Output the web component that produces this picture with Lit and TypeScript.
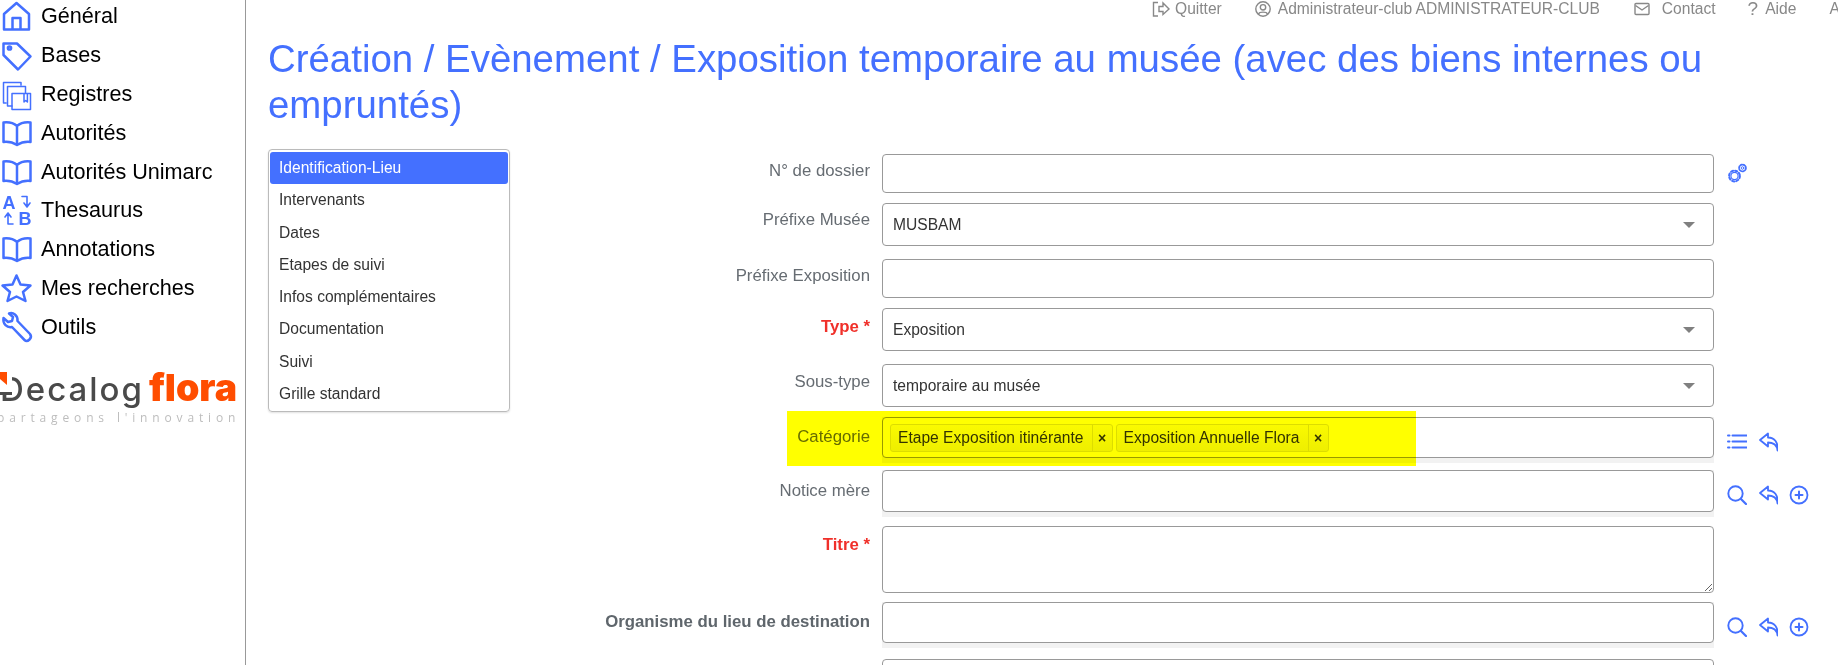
import { LitElement, html, css, svg } from "lit";
import { customElement } from "lit/decorators.js";

const book = svg`<path d="M17 14C13 10.5 8 10 3.5 10.5V30C8 29.5 13 30.5 17 33C21 30.5 26 29.5 30.5 30V10.5C26 10 21 10.5 17 14ZM17 14V33"/>`;
const menu = [
  { t: "Général", i: svg`<path d="M4 19L16.500 8L29 19V34.500H4ZM12.500 34.500V23H20.500V34.500"/>` },
  { t: "Bases", i: svg`<path d="M3.500 9.500H17L30.500 22.500L18 35.500L3.500 21Z"/><circle cx="9.500" cy="14" r="1.600"/>` },
  { t: "Registres", i: svg`<g stroke-width="1.500"><path d="M6 30H3.500V9.500H21V12M12 33H7.500V13.500H25.500V20"/><path d="M12 20.500H30.500V36.500H12ZM24 20.500V29L25.700 27.500L27.400 29V20.500"/></g>` },
  { t: "Autorités", i: book },
  { t: "Autorités Unimarc", i: book },
  { t: "Thesaurus", i: svg`<text x="2.500" y="19.500" class="gl">A</text><text x="18.500" y="35.500" class="gl">B</text><g stroke-width="1.600"><path d="M22 7.500H27V17M24 14L27 18L30 14M13 35H8V25M5 28L8 24L11 28"/></g>` },
  { t: "Annotations", i: book },
  { t: "Mes recherches", i: svg`<path d="M16.500 8.500L20.500 17.500L30.500 18.500L23 25L25.500 34L16.500 29.500L7.500 34L10 25L2.500 18.500L12.500 17.500Z"/>` },
  { t: "Outils", i: svg`<path d="M3.500 12L8 16L12 15L13 11L9 7.500C13 6 18 9 17.500 15L30 28C31.500 30 31 32 29.500 33.500C28 35 26 35.500 24.500 34L12 21C7 22 2.500 18 3.500 12Z"/>` },
];

const tabs = ["Identification-Lieu", "Intervenants", "Dates", "Etapes de suivi", "Infos complémentaires", "Documentation", "Suivi", "Grille standard"];

const gear = svg`<g fill="none" stroke="#4470ff"><circle cx="7.500" cy="13" r="3.600" stroke-width="1.200"/><circle cx="7.500" cy="13" r="5.400" stroke-width="2" stroke-dasharray="2.200 2.040"/><circle cx="15.500" cy="5" r="1.300" stroke-width="1"/><circle cx="15.500" cy="5" r="3.400" stroke-width="1.800" stroke-dasharray="1.500 1.170"/></g>`;
const listI = svg`<path d="M5.500 3.500H20M5.500 9.500H20M5.500 15.500H20" stroke-width="2"/><path d="M1 3.500H2.500M1 9.500H2.500M1 15.500H2.500" stroke-width="2"/>`;
const back = svg`<path d="M19.500 18.500C19 13 15.500 10.500 10 10.500V14.500L2 8L10 1.500V5.500C16.500 5.500 20.500 10.500 19.500 18.500Z" stroke-width="1.800" stroke-linejoin="round"/>`;
const search = svg`<circle cx="8.500" cy="8.500" r="7.200" stroke-width="1.900"/><path d="M14 14L19 19" stroke-width="2.200"/>`;
const plus = svg`<circle cx="10" cy="10" r="8.500" stroke-width="1.800"/><path d="M10 6.500V13.500M6.500 10H13.500" stroke-width="2"/>`;

interface Row {
  label: string; kind: string; mt: number; h: number; lt: number;
  value?: string; req?: boolean; bold?: boolean; strip?: boolean; icons?: unknown[]; iconTop?: number;
}
const rows: Row[] = [
  { label: "N° de dossier", kind: "input", mt: 0, h: 39, lt: 8, icons: [gear], iconTop: 9 },
  { label: "Préfixe Musée", kind: "select", mt: 10, h: 43, lt: 8, value: "MUSBAM" },
  { label: "Préfixe Exposition", kind: "input", mt: 13, h: 39, lt: 8 },
  { label: "Type", req: true, kind: "select", mt: 10, h: 43, lt: 10, value: "Exposition" },
  { label: "Sous-type", kind: "select", mt: 13, h: 43, lt: 9, value: "temporaire au musée" },
  { label: "Catégorie", kind: "tags", mt: 10, h: 41, lt: 11, strip: true, icons: [listI, back], iconTop: 15 },
  { label: "Notice mère", kind: "input", mt: 7, h: 42, lt: 12, strip: true, icons: [search, back, plus], iconTop: 15 },
  { label: "Titre", req: true, kind: "area", mt: 9, h: 67, lt: 10 },
  { label: "Organisme du lieu de destination", bold: true, kind: "input", mt: 9, h: 41, lt: 11, strip: true, icons: [search, back, plus], iconTop: 15 },
  { label: "", kind: "input", mt: 11, h: 41, lt: 11 },
];

@customElement("app-root")
export class AppRoot extends LitElement {
  static styles = css`
    :host { display: block; width: 1838px; height: 665px; overflow: hidden; background: #fff; font-family: "Liberation Sans", Arial, sans-serif; }
    .app { display: flex; height: 665px; }
    .side { width: 245px; flex: none; border-right: 1px solid #999; overflow: hidden; }
    .menu { margin-top: -5px; }
    .mi { display: flex; align-items: center; height: 38.9px; font-size: 21.600px; color: #000; gap: 7px; }
    .mi span { padding-top: 3px; white-space: nowrap; }
    .mi svg { width: 34px; height: 39px; flex: none; fill: none; stroke: #4470ff; stroke-width: 2.500; stroke-linejoin: round; stroke-linecap: round; }
    .gl { font: bold 18px "Liberation Sans", sans-serif; fill: #4470ff; stroke: none; }
    .logo { position: relative; margin-top: 20px; height: 70px; overflow: hidden; }
    .brand { display: flex; align-items: baseline; height: 38px; white-space: nowrap; }
    .dec { font: 500 33px Inter, sans-serif; color: #4a4a4a; letter-spacing: 2px; }
    .flora { font: 900 37.500px Inter, sans-serif; color: #ff4d00; margin-left: 5px; }
    .mark { position: absolute; left: 0; top: 6px; width: 12px; height: 26px; }
    .tag { font: 12px "Open Sans", sans-serif; color: #bdbdbd; letter-spacing: 4.850px; white-space: nowrap; margin-left: -3px; margin-top: 6px; }
    .main { flex: 1; min-width: 0; overflow: hidden; }
    .top { display: flex; align-items: center; height: 18px; padding-left: 906px; font-size: 15.600px; color: #888; white-space: nowrap; }
    .top svg { fill: none; stroke: #888; stroke-width: 1.400; flex: none; }
    .ti { display: flex; align-items: center; }
    .ml5 { margin-left: 5px; } .ml7 { margin-left: 7px; } .ml12 { margin-left: 12px; }
    .g33 { margin-left: 33px; } .g34 { margin-left: 34px; } .g32 { margin-left: 32px; }
    .q { font-size: 19px; margin-right: 7px; }
    h1 { margin: 18px 0 0 22px; font-size: 38.400px; line-height: 46px; font-weight: 400; color: #4470ff; width: 1480px; }
    .body { display: flex; margin: 21px 0 0 22px; align-items: flex-start; }
    .tabs { width: 238px; flex: none; border: 1px solid #bbb; border-radius: 4px; padding: 2px 1px 1px; box-shadow: 0 1px 2px rgba(0,0,0,.12); font-size: 15.600px; color: #333; }
    .tab { height: 32.300px; line-height: 31px; padding-left: 9px; }
    .tab.on { background: #4470ff; color: #fff; border-radius: 3px; }
    .form { flex: 1; min-width: 0; padding-top: 5px; }
    .row { display: flex; align-items: flex-start; }
    .lab { width: 360px; flex: none; text-align: right; font-size: 16.800px; line-height: 18px; color: #666c72; white-space: nowrap; }
    .lab.req { color: #f0302a; font-weight: 700; }
    .lab.bold { font-weight: 700; color: #5f666c; }
    .field { position: relative; margin-left: 12px; width: 832px; flex: none; }
    .field.strip { padding-bottom: 5px; background: #f2f2f2; }
    .box { display: flex; align-items: center; box-sizing: border-box; width: 100%; background: #fff; border: 1px solid #999; border-radius: 4px; padding: 0 10px; font: 15.600px "Liberation Sans", sans-serif; color: #333; margin: 0; outline: none; }
    textarea.box { display: block; resize: vertical; }
    .arrow { position: absolute; right: 19px; top: 50%; margin-top: -3px; border-style: solid; border-width: 6px 6px 0; border-color: #808080 transparent transparent; }
    .tags { padding: 0 6px 0 7px; gap: 3px; }
    .chip { display: flex; align-items: stretch; height: 28px; box-sizing: border-box; border: 1px solid #ddd; border-radius: 3px; background: linear-gradient(#fafafa, #eee); font-size: 15.600px; color: #333; white-space: nowrap; }
    .chip b { display: flex; align-items: center; padding: 0 8px 0 7px; font-weight: 400; }
    .chip i { display: flex; align-items: center; justify-content: center; width: 19px; border-left: 1px solid #ddd; font: bold 14px "Liberation Sans", sans-serif; }
    .hl { position: absolute; left: -95px; top: -6px; width: 629px; height: 55px; background: #ffff00; mix-blend-mode: multiply; pointer-events: none; }
    .icons { display: flex; gap: 11px; margin-left: 13px; }
    .icons svg { width: 20px; height: 20px; fill: none; stroke: #4470ff; stroke-linecap: round; }
  `;

  private field(r: Row) {
    const style = `height:${r.h}px`;
    if (r.kind === "area") return html`<textarea class="box" style=${style}></textarea>`;
    if (r.kind === "select")
      return html`<div class="box" style=${style}>${r.value}<span class="arrow"></span></div>`;
    if (r.kind === "tags")
      return html`<div class="box tags" style=${style}>
          <div class="chip"><b>Etape Exposition itinérante</b><i>×</i></div>
          <div class="chip"><b>Exposition Annuelle Flora</b><i>×</i></div>
        </div>
        <div class="hl"></div>`;
    return html`<input class="box" style=${style} />`;
  }

  render() {
    return html`<div class="app">
      <aside class="side">
        <div class="menu">
          ${menu.map((m) => html`<div class="mi"><svg viewBox="0 0 34 39">${m.i}</svg><span>${m.t}</span></div>`)}
        </div>
        <div class="logo">
          <div class="brand"><span class="dec">Decalog</span><span class="flora">flora</span></div>
          <svg class="mark" viewBox="0 0 12 26"><rect width="12" height="21" fill="#fff"/><path d="M0 1L7 1L7 14L0 8Z" fill="#ff4d00"/><rect y="21" width="12" height="3" fill="#4a4a4a"/></svg>
          <div class="tag">partageons l'innovation</div>
        </div>
      </aside>
      <main class="main">
        <div class="top">
          <span class="ti"><svg width="18" height="16" viewBox="0 0 18 16"><path d="M6 1.500H1.500V15H6M7 5.500H11V2L17 8L11 13.500V10.500H7Z"/></svg><span class="ml5">Quitter</span></span>
          <span class="ti g33"><svg width="16" height="16" viewBox="0 0 16 16"><circle cx="8" cy="8" r="7.200"/><circle cx="8" cy="6.300" r="2.700"/><path d="M3.500 13C4.500 10.500 11.500 10.500 12.500 13"/></svg><span class="ml7">Administrateur-club ADMINISTRATEUR-CLUB</span></span>
          <span class="ti g34"><svg width="16" height="14" viewBox="0 0 16 14"><rect x="1" y="1.500" width="14" height="11" rx="1"/><path d="M1.500 3.500L8 8L14.500 3.500"/></svg><span class="ml12">Contact</span></span>
          <span class="ti g32"><span class="q">?</span>Aide</span>
          <span class="ti g33">A propos</span>
        </div>
        <h1>Création / Evènement / Exposition temporaire au musée (avec des biens internes ou empruntés)</h1>
        <div class="body">
          <nav class="tabs">
            ${tabs.map((t, i) => html`<div class="tab ${i === 0 ? "on" : ""}">${t}</div>`)}
          </nav>
          <div class="form">
            ${rows.map((r) => html`<div class="row" style="margin-top:${r.mt}px">
              <div class="lab ${r.req ? "req" : ""} ${r.bold ? "bold" : ""}" style="padding-top:${r.lt}px">${r.label}${r.req ? " *" : ""}</div>
              <div class="field ${r.strip ? "strip" : ""}">${this.field(r)}</div>
              ${r.icons ? html`<div class="icons" style="padding-top:${r.iconTop}px">${r.icons.map((ic) => html`<svg viewBox="0 0 20 20">${ic}</svg>`)}</div>` : ""}
            </div>`)}
          </div>
        </div>
      </main>
    </div>`;
  }
}
